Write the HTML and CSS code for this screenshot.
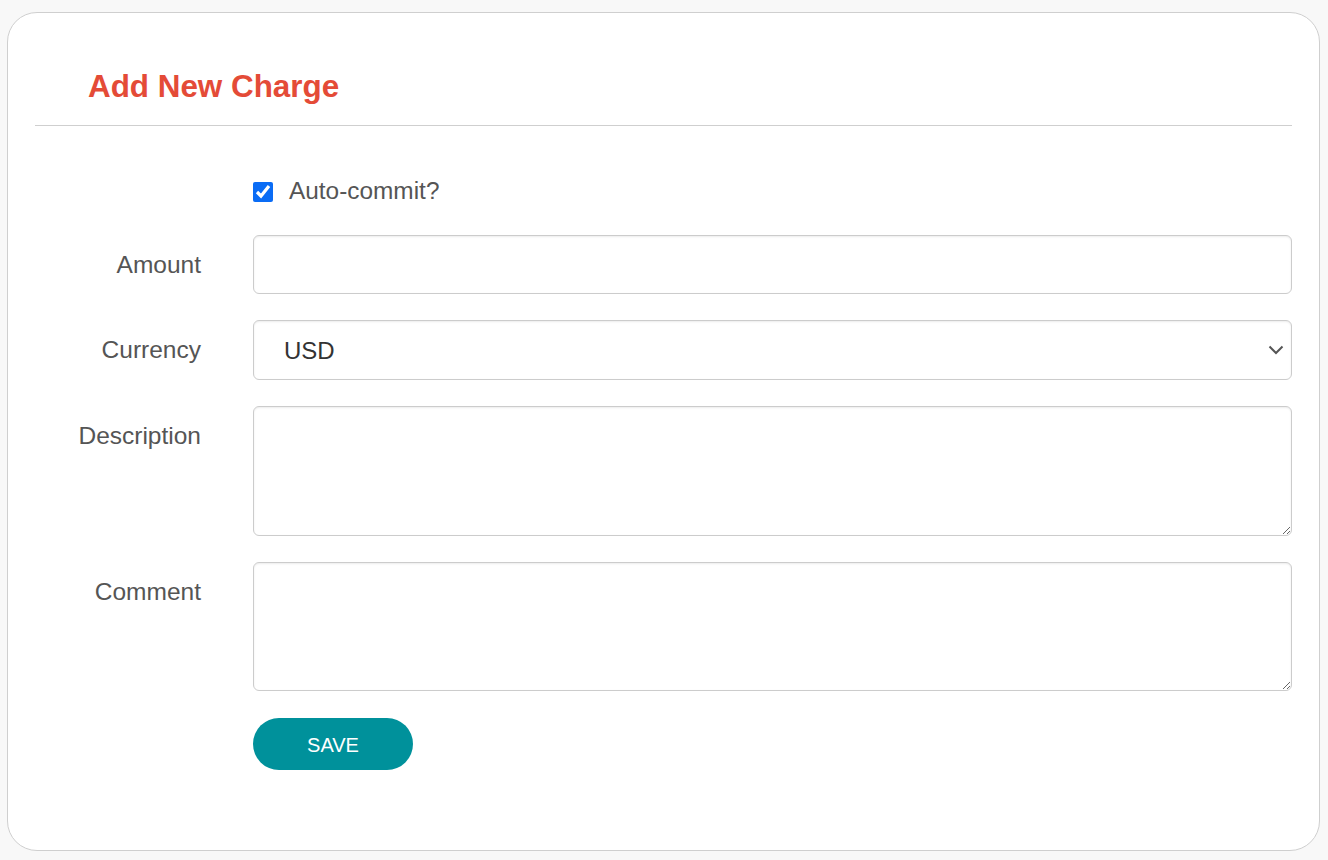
FILE: index.html
```html
<!DOCTYPE html>
<html lang="en">
<head>
<meta charset="utf-8">
<title>Add New Charge</title>
<link rel="stylesheet" href="styles.css">
</head>
<body>
<div class="card">
  <div class="card-header">
    <h1 class="title">Add New Charge</h1>
  </div>
  <form class="form">
    <div class="row">
      <div class="label"></div>
      <label class="check">
        <input type="checkbox" checked>
        <span>Auto-commit?</span>
      </label>
    </div>
    <div class="row">
      <label class="label" for="amount">Amount</label>
      <input id="amount" class="control input" type="text">
    </div>
    <div class="row">
      <label class="label" for="currency">Currency</label>
      <div class="select-wrap">
        <select id="currency" class="control select">
          <option>USD</option>
        </select>
        <svg class="chevron" width="16" height="10" viewBox="0 0 16 10"><path d="M1.5 1.5 L8 8 L14.5 1.5" fill="none" stroke="#555" stroke-width="2"/></svg>
      </div>
    </div>
    <div class="row">
      <label class="label" for="description">Description</label>
      <textarea id="description" class="control textarea"></textarea>
    </div>
    <div class="row">
      <label class="label" for="comment">Comment</label>
      <textarea id="comment" class="control textarea short"></textarea>
    </div>
    <div class="row actions">
      <div class="label"></div>
      <div><button type="button" class="save">SAVE</button></div>
    </div>
  </form>
</div>
</body>
</html>
```

FILE: styles.css
```css
html, body {
  margin: 0;
  padding: 0;
}
body {
  background: #f8f8f8;
  font-family: "Liberation Sans", Arial, sans-serif;
  color: #555;
  padding: 12px 8px 9px 7px;
}
.card {
  background: #fff;
  border: 1px solid #cfcfcf;
  border-radius: 30px;
  padding: 0 27px 80px 27px;
  box-sizing: border-box;
  height: 839px;
}
.card-header {
  padding: 54px 0 18px 53px;
  border-bottom: 1px solid #cfcfcf;
}
.title {
  margin: 0;
  font-size: 31.4px;
  line-height: 40px;
  font-weight: bold;
  color: #e44b37;
}
.form {
  padding-top: 49px;
  display: flex;
  flex-direction: column;
  gap: 26px;
}
.row {
  display: grid;
  grid-template-columns: 166px 1fr;
  column-gap: 52px;
  align-items: start;
}
.label {
  text-align: right;
  font-size: 24.5px;
  line-height: 59px;
  color: #555;
}
.check {
  display: flex;
  align-items: center;
  gap: 16px;
  height: 34px;
  font-size: 24.4px;
  line-height: 32px;
  color: #555;
}
.check span {
  margin-top: -2px;
}
.check input {
  width: 20px;
  height: 20px;
  margin: 0;
  accent-color: #0a6cf5;
}
.control {
  box-sizing: border-box;
  width: 100%;
  border: 1px solid #ccc;
  border-radius: 6px;
  box-shadow: inset 0 1px 2px rgba(0,0,0,0.08);
  background: #fff;
  font-family: "Liberation Sans", Arial, sans-serif;
  font-size: 24px;
  color: #555;
  margin: 0;
  outline: none;
}
.input {
  height: 59px;
  padding: 0 30px;
}
.select-wrap {
  position: relative;
}
.select {
  appearance: none;
  -webkit-appearance: none;
  height: 60px;
  padding: 0 30px;
  color: #333;
}
.chevron {
  position: absolute;
  right: 8px;
  top: 25px;
}
.textarea {
  height: 130px;
  padding: 10px 30px;
  resize: vertical;
  display: block;
}
.textarea.short {
  height: 129px;
}
.actions {
  margin-top: 1px;
}
.save {
  width: 160px;
  height: 52px;
  border: none;
  border-radius: 26px;
  background: #00919b;
  color: #fff;
  font-family: "Liberation Sans", Arial, sans-serif;
  font-size: 20px;
  padding: 3px 0 0 0;
  cursor: pointer;
}
```
